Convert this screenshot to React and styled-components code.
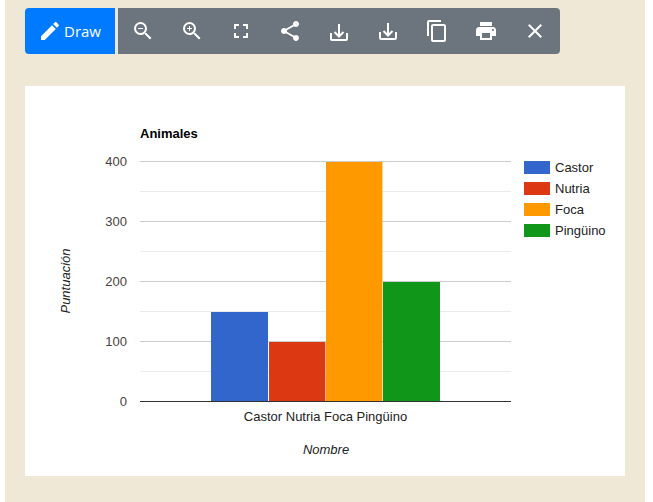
import styled, { createGlobalStyle } from 'styled-components';
import { MdEdit, MdZoomOut, MdZoomIn, MdFullscreen, MdShare, MdContentCopy, MdPrint, MdClose } from 'react-icons/md';

const GlobalStyle = createGlobalStyle`
  html, body {
    margin: 0;
    padding: 0;
    background: #fff;
  }
  body {
    font-family: "Liberation Sans", Arial, sans-serif;
  }
`;

const Page = styled.div`
  width: 640px;
  height: 502px;
  margin-left: 5px;
  padding: 8px 20px 26px;
  box-sizing: border-box;
  background: #efe8d6;
  display: flex;
  flex-direction: column;
  gap: 32px;
`;

const Toolbar = styled.div`
  display: flex;
  width: 535px;
  height: 46px;
  flex: none;
`;

const DrawButton = styled.div`
  width: 90px;
  display: flex;
  align-items: center;
  justify-content: center;
  gap: 2px;
  background: #007bff;
  color: #fff;
  font-family: "Open Sans", sans-serif;
  font-size: 15px;
  border-radius: 4px 0 0 4px;
  margin-right: 3px;
  svg { width: 24px; height: 24px; margin-left: -1px; }
`;

const ToolGroup = styled.div`
  flex: 1;
  display: flex;
  align-items: center;
  background: #6c757d;
  border-radius: 0 4px 4px 0;
  color: #fff;
`;

const ToolButton = styled.div`
  width: 49px;
  display: flex;
  align-items: center;
  justify-content: center;
  svg { width: 24px; height: 24px; }
`;

const ChartCard = styled.div`
  width: 600px;
  height: 390px;
  flex: none;
  background: #fff;
`;

const plot = { left: 115, right: 486, top: 75, bottom: 315 };
const ticks = [0, 100, 200, 300, 400];
const minor = [50, 150, 250, 350];
const series = [
  { name: 'Castor', value: 150, color: '#3366cc', x: 186, w: 57 },
  { name: 'Nutria', value: 100, color: '#dc3912', x: 244, w: 56.4 },
  { name: 'Foca', value: 400, color: '#ff9900', x: 301, w: 56.4 },
  { name: 'Pingüino', value: 200, color: '#109618', x: 358, w: 57 },
];
const yOf = (v) => plot.bottom - (v / 400) * (plot.bottom - plot.top);

function DownloadIcon({ lift = 0 }) {
  return (
    <svg viewBox="0 0 24 24" fill="none" stroke="currentColor" strokeWidth="2" style={{ transform: `translateY(${-lift}px)` }}>
      <path d="M4 14v6a1 1 0 0 0 1 1h14a1 1 0 0 0 1-1v-6" />
      <path d="M12 5v12.5M7.5 13l4.5 4.5 4.5-4.5" />
    </svg>
  );
}

function Chart() {
  return (
    <svg width="600" height="390" fontFamily="'Liberation Sans', Arial, sans-serif" fontSize="13">
      <text x="115" y="52" fontWeight="700" fill="#000">Animales</text>
      {minor.map((v) => (
        <rect key={v} x={plot.left} y={yOf(v)} width={plot.right - plot.left} height="1" fill="#ebebeb" />
      ))}
      {ticks.slice(1).map((v) => (
        <rect key={v} x={plot.left} y={yOf(v)} width={plot.right - plot.left} height="1" fill="#cccccc" />
      ))}
      {series.map((s) => (
        <rect key={s.name} x={s.x} y={yOf(s.value) + 1} width={s.w} height={plot.bottom - yOf(s.value) - 1} fill={s.color} />
      ))}
      <rect x={plot.left} y={plot.bottom} width={plot.right - plot.left} height="1" fill="#333333" />
      {ticks.map((v) => (
        <text key={v} x="102" y={yOf(v) + 5} textAnchor="end" fill="#444444">{v}</text>
      ))}
      <text x="300.5" y="335" textAnchor="middle" fill="#222222">Castor Nutria Foca Pingüino</text>
      <text x="301" y="368" textAnchor="middle" fontStyle="italic" fill="#222222">Nombre</text>
      <text transform="translate(45 195) rotate(-90)" textAnchor="middle" fontStyle="italic" fill="#222222">Puntuación</text>
      {series.map((s, i) => (
        <g key={s.name}>
          <rect x="499" y={75 + i * 21} width="26" height="13" fill={s.color} />
          <text x="530" y={86 + i * 21} fill="#222222">{s.name}</text>
        </g>
      ))}
    </svg>
  );
}

export default function App() {
  return (
    <>
      <GlobalStyle />
      <Page>
        <Toolbar>
          <DrawButton><MdEdit />Draw</DrawButton>
          <ToolGroup>
            <ToolButton><MdZoomOut /></ToolButton>
            <ToolButton><MdZoomIn /></ToolButton>
            <ToolButton><MdFullscreen /></ToolButton>
            <ToolButton><MdShare /></ToolButton>
            <ToolButton><DownloadIcon /></ToolButton>
            <ToolButton><DownloadIcon lift={1} /></ToolButton>
            <ToolButton><MdContentCopy /></ToolButton>
            <ToolButton><MdPrint /></ToolButton>
            <ToolButton><MdClose /></ToolButton>
          </ToolGroup>
        </Toolbar>
        <ChartCard><Chart /></ChartCard>
      </Page>
    </>
  );
}
